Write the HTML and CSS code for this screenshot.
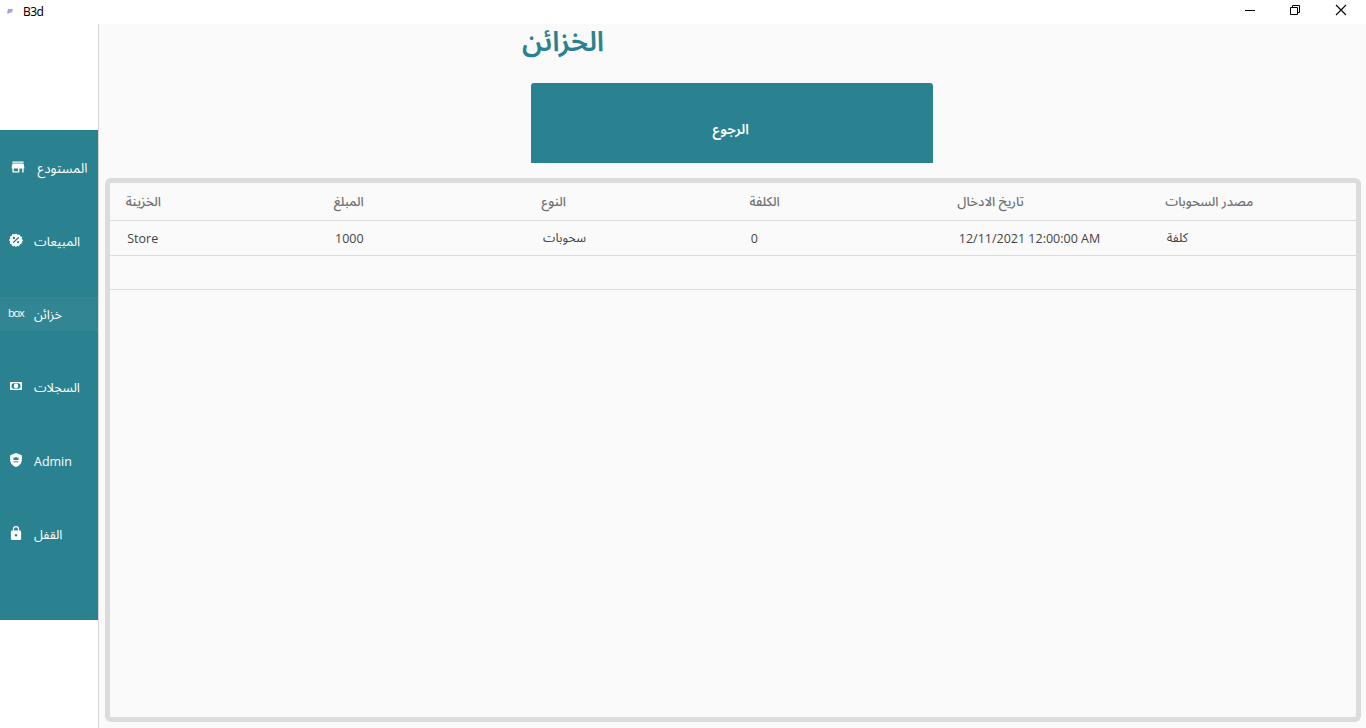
FILE: index.html
```html
<!DOCTYPE html>
<html lang="ar">
<head>
<meta charset="utf-8">
<title>B3d</title>
<link rel="stylesheet" href="styles.css">
</head>
<body>
<header class="titlebar">
  <svg class="app-icon" width="6" height="6" viewBox="0 0 6 6"><path d="M1 1h5L5 4.500H3L2 5.500H0z" fill="#a9a2e2"/></svg>
  <span class="app-name">B3d</span>
  <div class="controls">
    <svg width="12" height="12" viewBox="0 0 12 12"><path d="M1 6.5h10" stroke="#000"/></svg>
    <svg width="12" height="12" viewBox="0 0 12 12" fill="none" stroke="#000"><path d="M1.5 3.5h7v7h-7zM3.5 3.5v-2h7v7h-2"/></svg>
    <svg width="12" height="12" viewBox="0 0 12 12"><path d="M1 1l10 10M11 1L1 11" stroke="#000" stroke-width="1.1"/></svg>
  </div>
</header>
<div class="body">
  <aside class="sidebar">
    <nav class="nav">
      <a class="item first"><svg class="icon" viewBox="2 2 20 20"><path d="M20 4H4v2h16zm1 10v-2l-1-5H4l-1 5v2h1v6h10v-6h4v6h2v-6zm-9 4H6v-4h6z"/></svg><span class="label">المستودع</span></a>
      <a class="item"><svg class="icon" viewBox="0 0 24 24"><path fill-rule="evenodd" d="M12 1l2.7 2 3.4-.5 1.3 3.1 3.1 1.3L22 10.3l2 2.7-2 2.7-.5 2.6-3 1.2-1.4 3-3.3-.4L12 24l-2.800-1.900-3.300.4-1.300-3-3.100-1.300.4-3.400L0 12l1.900-2.700-.4-3.300 3.100-1.200L5.900 1.700l3.300.5zM8.500 6.500a2 2 0 1 0 0 4 2 2 0 1 0 0-4m7 7a2 2 0 1 0 0 4 2 2 0 1 0 0-4M16 6.500L6.500 16 8 17.500 17.500 8z"/></svg><span class="label">المبيعات</span></a>
      <a class="item active"><span class="icon box">box</span><span class="label">خزائن</span></a>
      <a class="item"><svg class="icon" viewBox="0 0 14 14"><path fill-rule="evenodd" d="M1 3h12v8H1zM4 4.200Q3.800 5 2.600 5.200v3.600Q3.800 9 4 9.800h6q.2-.8 1.400-1V5.200Q10.200 5 10 4.200z"/><ellipse cx="7" cy="7" rx="2.200" ry="2.400"/></svg><span class="label">السجلات</span></a>
      <a class="item"><svg class="icon" viewBox="1 0 22 24"><path fill-rule="evenodd" d="M12 0L2 4v7c0 6 4 11 10 13 6-2 10-7 10-13V4zM7 7l2.500 2L12 6l2.500 3L17 7l-1 5H8zm1 7h8v2H8z"/></svg><span class="label latin">Admin</span></a>
      <a class="item"><svg class="icon" viewBox="1 1 22 22"><path fill-rule="evenodd" d="M18 8h-1V6A5 5 0 0 0 7 6v2H6a2 2 0 0 0-2 2v11a2 2 0 0 0 2 2h12a2 2 0 0 0 2-2V10a2 2 0 0 0-2-2M9 8V6a3 3 0 0 1 6 0v2zm3 5.500a2 2 0 1 1 0 4 2 2 0 0 1 0-4"/></svg><span class="label">القفل</span></a>
    </nav>
  </aside>
  <main class="main">
    <h1 class="title">الخزائن</h1>
    <button class="back">الرجوع</button>
    <section class="grid">
      <div class="row head"><span>الخزينة</span><span>المبلغ</span><span>النوع</span><span>الكلفة</span><span>تاريخ الادخال</span><span>مصدر السحوبات</span></div>
      <div class="row data"><span>Store</span><span>1000</span><span>سحوبات</span><span>0</span><span>12/11/2021 12:00:00 AM</span><span>كلفة</span></div>
      <div class="row empty"></div>
    </section>
  </main>
</div>
</body>
</html>
```
FILE: styles.css
```css
* { box-sizing: border-box; }
body { margin: 0; height: 728px; overflow: hidden; display: flex; flex-direction: column; background: #fff; font-family: "Open Sans", "Noto Sans Arabic", "DejaVu Sans", sans-serif; font-size: 12.5px; }
.titlebar { height: 24px; display: flex; align-items: center; padding: 0 19px 4px 7px; }
.app-icon { margin-top: 2px; }
.app-name { margin-left: 10px; font: 12px/16px "Noto Sans", sans-serif; letter-spacing: -.6px; padding-top: 3px; color: #000; }
.controls { margin-left: auto; display: flex; gap: 33px; }
.controls svg { display: block; }
.controls svg:last-child { margin-left: 1px; }
.body { flex: 1; display: flex; min-height: 0; }
.sidebar { width: 99px; border-right: 1px solid #d6d6d6; padding-top: 106.400px; flex: none; }
.nav { height: 490px; margin-right: .5px; background: #2a8290; padding-top: 20px; display: flex; flex-direction: column; gap: 39.200px; color: #fff; font-size: 12.800px; }
.item { height: 34px; flex: none; display: flex; align-items: center; padding-left: 9px; }
.item.first { padding-left: 11px; }
.item.active { background: #328693; }
.icon { width: 14px; height: 14px; fill: #fff; flex: none; margin-top: -1px; }
.box { font: 11px/14px "Open Sans", sans-serif; letter-spacing: -1.200px; margin-left: -1px; margin-right: 1px; }
.label { margin-left: 11px; padding-top: 2px; white-space: nowrap; }
.first .label { margin-left: 12.500px; padding-top: 3px; font-size: 13.300px; }
.latin { font-size: 12.500px; }
.main { flex: 1; min-width: 0; background: #fafafa; padding: 0 5px 6px 6px; display: flex; flex-direction: column; }
.title { margin: 0 0 0 417px; height: 59px; font-size: 28px; line-height: 33px; font-weight: 600; color: #2a8290; }
.back { align-self: flex-start; margin: 0 0 15px 426px; width: 402.400px; height: 80px; padding: 13px 3px 0 0; border: 0; border-radius: 3px 3px 0 0; background: #2a8290; color: #fff; font: inherit; font-size: 14px; font-weight: 600; }
.grid { flex: 1; border: 5px solid #dcdcdc; border-radius: 6px; }
.row { display: grid; grid-template-columns: repeat(5, 207.900px) 1fr; align-items: center; padding-left: 16px; border-bottom: 1px solid #dcdcdc; white-space: nowrap; }
.head { height: 38px; padding-top: 1px; padding-left: 15.800px; color: #707070; font-size: 12.900px; font-weight: 500; }
.data { height: 35px; padding-left: 17.200px; color: #444; }
.empty { height: 34px; }
```
